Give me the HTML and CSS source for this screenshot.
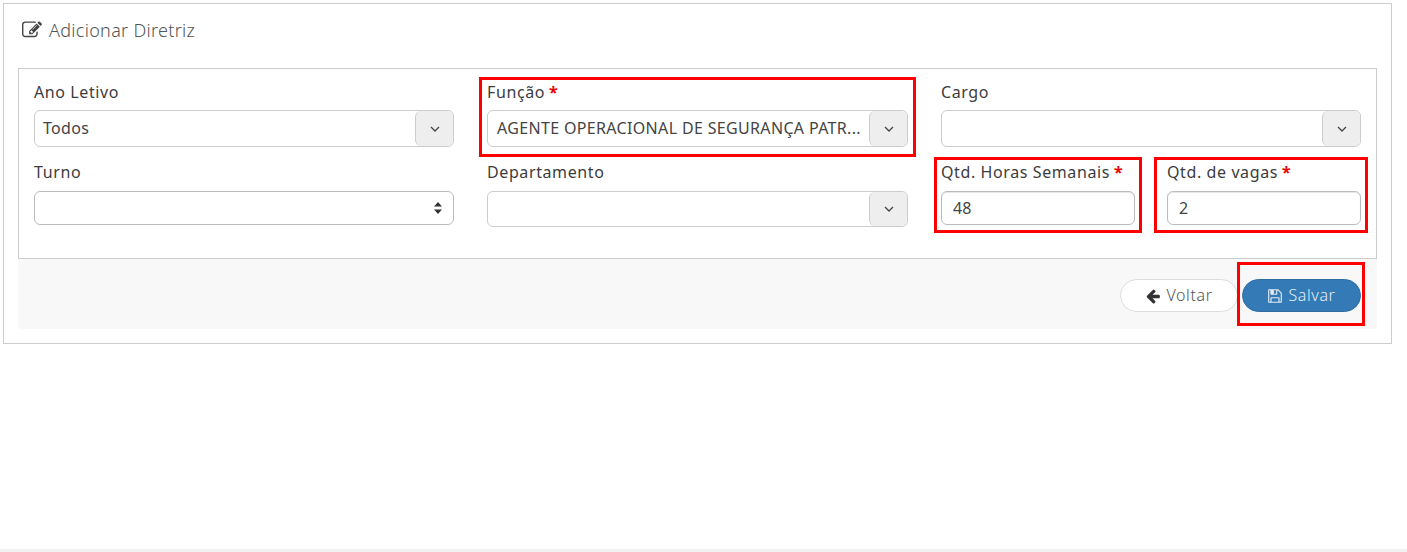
FILE: index.html
```html
<!DOCTYPE html>
<html lang="en">
  <head>
    <meta charset="UTF-8" />
    <title>Adicionar Diretriz</title>
    <link rel="stylesheet" href="styles.css">
  </head>
  <body>
    <div class="panel">
      <h1 class="panel-title">
        <svg class="icon-title" viewBox="0 0 1792 1792"><path d="M888 1184l116-116-152-152-116 116v56h96v96h56zm440-720q-16-16-33 1l-350 350q-17 17-1 33t33-1l350-350q17-17 1-33zm80 594v190q0 119-84.5 203.5t-203.5 84.5h-832q-119 0-203.5-84.5t-84.5-203.5v-832q0-119 84.5-203.5t203.5-84.5h832q63 0 117 25 15 7 18 23 3 17-9 29l-49 49q-14 14-32 8-23-6-45-6h-832q-66 0-113 47t-47 113v832q0 66 47 113t113 47h832q66 0 113-47t47-113v-126q0-13 9-22l64-64q15-15 35-7t20 29zm-96-738l288 288-672 672h-288v-288zm444 132l-92 92-288-288 92-92q28-28 68-28t68 28l152 152q28 28 28 68t-28 68z"/></svg>
        Adicionar Diretriz
      </h1>

      <form class="form-box">
        <div class="form-body">
          <div class="field">
            <label>Ano Letivo</label>
            <div class="combo">
              <span class="combo-value">Todos</span>
              <span class="combo-btn"><svg viewBox="0 0 10 6"><path d="M1 1l4 4 4-4"/></svg></span>
            </div>
          </div>
          <div class="field">
            <span class="mark mark-funcao"></span>
            <label>Função<span class="req">*</span></label>
            <div class="combo">
              <span class="combo-value combo-long">AGENTE OPERACIONAL DE SEGURANÇA PATR...</span>
              <span class="combo-btn"><svg viewBox="0 0 10 6"><path d="M1 1l4 4 4-4"/></svg></span>
            </div>
          </div>
          <div class="field">
            <label>Cargo</label>
            <div class="combo">
              <span class="combo-value"></span>
              <span class="combo-btn"><svg viewBox="0 0 10 6"><path d="M1 1l4 4 4-4"/></svg></span>
            </div>
          </div>

          <div class="field field-low">
            <label>Turno</label>
            <div class="combo combo-native">
              <span class="combo-value"></span>
              <svg class="icon-sort" viewBox="0 0 8 12"><path d="M4 0l4 4.5H0zM4 12L0 7.5h8z"/></svg>
            </div>
          </div>
          <div class="field field-low">
            <label>Departamento</label>
            <div class="combo combo-short">
              <span class="combo-value"></span>
              <span class="combo-btn"><svg viewBox="0 0 10 6"><path d="M1 1l4 4 4-4"/></svg></span>
            </div>
          </div>
          <div class="field-pair">
            <div class="field field-low">
              <span class="mark mark-horas"></span>
              <label>Qtd. Horas Semanais<span class="req">*</span></label>
              <input class="text-input" type="text" value="48" />
            </div>
            <div class="field field-low">
              <span class="mark mark-vagas"></span>
              <label>Qtd. de vagas<span class="req">*</span></label>
              <input class="text-input" type="text" value="2" />
            </div>
          </div>
        </div>

        <div class="form-footer">
          <button class="btn btn-back" type="button">
            <svg viewBox="0 0 1792 1792"><path d="M1664 896v128q0 53-32.5 90.5t-84.5 37.5h-704l293 294q38 36 38 90t-38 90l-75 76q-37 37-90 37-52 0-91-37l-651-652q-37-37-37-90 0-52 37-91l651-650q38-38 91-38 52 0 90 38l75 74q38 38 38 91t-38 91l-293 293h704q52 0 84.5 37.5t32.5 90.5z"/></svg>
            Voltar
          </button>
          <div class="btn-wrap">
            <span class="mark mark-save"></span>
            <button class="btn btn-save" type="button">
              <svg viewBox="0 0 1792 1792"><path d="M512 1536h768v-384h-768v384zm896 0h128v-896q0-14-10-38.5t-20-34.5l-281-281q-10-10-34-20t-39-10v416q0 40-28 68t-68 28h-576q-40 0-68-28t-28-68v-416h-128v1280h128v-416q0-40 28-68t68-28h832q40 0 68 28t28 68v416zm-384-928v-320q0-13-9.5-22.5t-22.5-9.5h-192q-13 0-22.5 9.5t-9.5 22.5v320q0 13 9.5 22.5t22.5 9.5h192q13 0 22.5-9.5t9.5-22.5zm640 32v928q0 40-28 68t-68 28h-1344q-40 0-68-28t-28-68v-1344q0-40 28-68t68-28h928q40 0 88 20t76 48l280 280q28 28 48 76t20 88z"/></svg>
              Salvar
            </button>
          </div>
        </div>
      </form>
    </div>
    <div class="page-edge"></div>
  </body>
</html>
```

FILE: styles.css
```css
* {
  box-sizing: border-box;
}

html,
body {
  height: 552px;
  overflow: hidden;
}

body {
  display: flex;
  flex-direction: column;
  margin: 0;
  padding: 3px 15px 0 3px;
  font-family: "Noto Sans", "Open Sans", sans-serif;
  font-size: 16px;
  color: #444;
  background: #fff;
}

.panel {
  height: 341px;
  padding: 0 14px;
  border: 1px solid #ccc;
}

.panel-title {
  display: flex;
  align-items: center;
  gap: 7px;
  height: 64px;
  margin: 0;
  padding: 0 0 13px 4px;
  font-size: 18px;
  font-weight: 300;
  letter-spacing: 0.3px;
  color: #555;
}

.icon-title {
  width: 20px;
  height: 20px;
  fill: #444;
}

.form-box {
  background: #fff;
}

.form-body {
  display: grid;
  grid-template-columns: 420px 421px 420px;
  grid-template-rows: 80px 110px;
  column-gap: 33px;
  height: 191px;
  padding: 11px 15px 0;
  border: 1px solid #ccc;
}

.field {
  position: relative;
}

.field label {
  display: block;
  height: 30px;
  font-size: 16px;
  line-height: 25px;
  letter-spacing: 0.6px;
  color: #3c3c3c;
}

.field-low label {
  height: 31px;
}

.req {
  margin-left: 4px;
  color: #e00;
  font-weight: 700;
}

.combo {
  display: flex;
  height: 37px;
  border: 1px solid #ccc;
  border-radius: 6px;
  background: #fff;
  overflow: hidden;
}

.combo-short {
  height: 36px;
}

.combo-native {
  align-items: center;
  height: 34px;
  padding-right: 11px;
  border-color: #bbb;
}

.combo-value {
  flex: 1;
  min-width: 0;
  padding: 0 8px;
  line-height: 34px;
  font-size: 16px;
  letter-spacing: 0.3px;
  white-space: nowrap;
}

.combo-long {
  padding-left: 9px;
  letter-spacing: 0.34px;
}

.combo-btn {
  display: flex;
  align-items: center;
  justify-content: center;
  width: 38px;
  border-left: 1px solid #ccc;
  border-radius: 6px;
  background: #eee;
}

.combo-btn svg {
  width: 10px;
  height: 6px;
  fill: none;
  stroke: #444;
  stroke-width: 1.3;
}

.icon-sort {
  width: 8px;
  height: 12px;
  fill: #333;
}

.field-pair {
  display: grid;
  grid-template-columns: 194px 194px;
  column-gap: 32px;
}

.text-input {
  display: block;
  width: 100%;
  height: 34px;
  padding: 0 11px;
  border: 1px solid #bbb;
  border-radius: 6px;
  box-shadow: inset 0 1px 1px rgba(0, 0, 0, 0.1);
  font: inherit;
  color: #444;
}

.form-footer {
  display: flex;
  justify-content: flex-end;
  align-items: flex-start;
  gap: 4px;
  height: 70px;
  padding: 20px 16px 0;
  background: #f8f8f8;
}

.btn {
  display: flex;
  align-items: center;
  justify-content: center;
  gap: 5px;
  height: 33px;
  padding: 0 0 2px;
  border-radius: 17px;
  font: inherit;
  font-weight: 300;
  letter-spacing: 0.6px;
}

.btn svg {
  width: 16px;
  height: 16px;
  margin-top: 2px;
}

.btn-back {
  width: 118px;
  border: 1px solid #ddd;
  background: #fff;
  color: #555;
}

.btn-back svg {
  fill: #333;
}

.btn-wrap {
  position: relative;
}

.btn-save {
  width: 119px;
  border: 1px solid #2e6da4;
  background: #337ab7;
  color: #e4edf5;
}

.btn-save svg {
  fill: #e4edf5;
}

/* red boxes drawn over the screenshot */
.mark {
  position: absolute;
  border: 3px solid #f00;
  pointer-events: none;
}

.mark-funcao {
  inset: -3px -8px 3px -8px;
}

.mark-horas {
  inset: -3px -7px 37px -7px;
}

.mark-vagas {
  inset: -3px -7px 37px -13px;
}

.mark-save {
  inset: -17px -4px -14px -5px;
}

.page-edge {
  height: 3px;
  margin: auto -15px 0 -3px;
  background: #f0f0f0;
}
```
